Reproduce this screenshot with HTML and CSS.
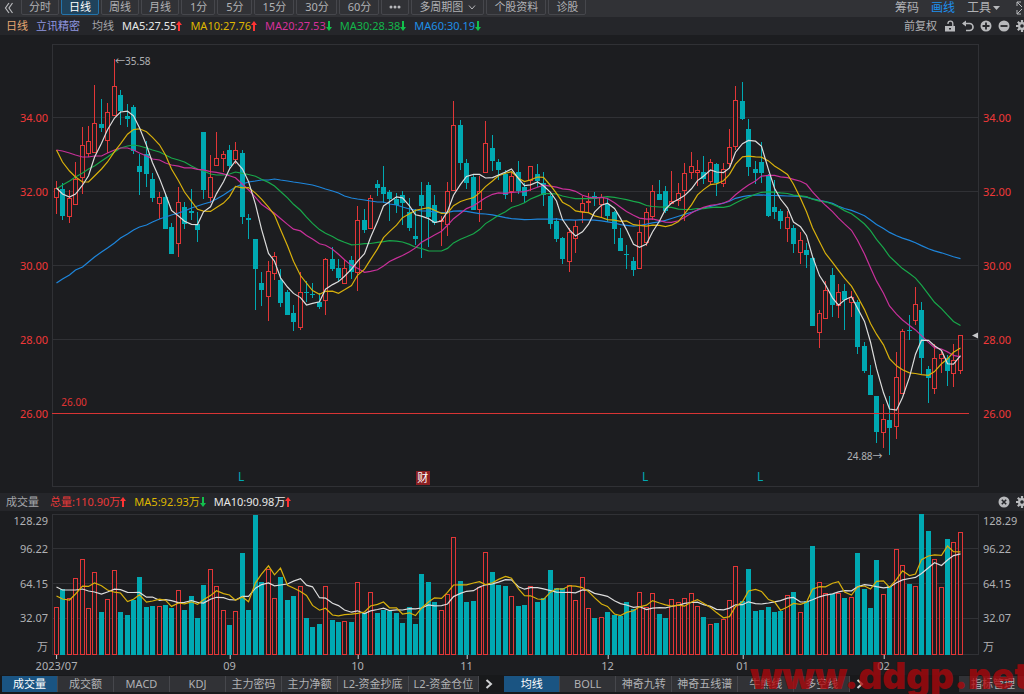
FILE: index.html
```html
<!DOCTYPE html>
<html lang="zh-CN">
<head>
<meta charset="utf-8">
<title>立讯精密 日线</title>
<link rel="stylesheet" href="styles.css">
</head>
<body>
<svg class="defs" aria-hidden="true">
  <symbol id="up" viewBox="0 0 6 10"><path d="M3 0L6 4H4V10H2V4H0z" fill="#ff3434"/></symbol>
  <symbol id="down" viewBox="0 0 6 10"><path d="M3 10L6 6H4V0H2V6H0z" fill="#12c04c"/></symbol>
  <symbol id="gear" viewBox="0 0 12 12"><g stroke="#b8b9bc" stroke-width="2.2"><path d="M6 0V12M0 6H12M1.8 1.8L10.2 10.2M10.2 1.8L1.8 10.2"/></g><circle cx="6" cy="6" r="4" fill="#b8b9bc"/><circle cx="6" cy="6" r="1.8" fill="#25262a"/></symbol>
</svg>

<nav class="toolbar">
  <button class="back" aria-label="返回"><svg width="10" height="12" viewBox="0 0 10 12"><path d="M5 1L1.500 6L5 11M8.500 1L5 6L8.500 11" fill="none" stroke="#b8b9bc" stroke-width="1.200"/></svg></button>
  <div class="periods">
    <button>分时</button>
    <button class="active">日线</button>
    <button>周线</button>
    <button>月线</button>
    <button class="minutes">1分</button>
    <button class="minutes">5分</button>
    <button class="minutes">15分</button>
    <button class="minutes">30分</button>
    <button class="minutes">60分</button>
    <button aria-label="更多"><svg width="12" height="4" viewBox="0 0 12 4" fill="#b8b9bc"><circle cx="2" cy="2" r="1.500"/><circle cx="6" cy="2" r="1.500"/><circle cx="10" cy="2" r="1.500"/></svg></button>
    <button>多周期图<svg class="chev" width="8" height="5" viewBox="0 0 8 5"><path d="M1 .5L4 4L7 .5" fill="none" stroke="#b8b9bc"/></svg></button>
    <button>个股资料</button>
    <button>诊股</button>
  </div>
  <div class="tools">
    <button>筹码</button>
    <button class="on">画线</button>
    <button>工具<svg width="7" height="4" viewBox="0 0 7 4"><path d="M0 0H7L3.500 4z" fill="#b8b9bc"/></svg></button>
    <button class="edge" aria-label="全屏"><svg width="6" height="14" viewBox="0 0 6 14"><path d="M1 5V1H5M1 1L6 6M1 9V13H5M1 13L6 8" fill="none" stroke="#b8b9bc"/></svg></button>
  </div>
</nav>

<header class="info">
  <div class="legend">
    <span class="c-day">日线</span>
    <span class="c-name">立讯精密</span>
    <span class="c-grey label">均线</span>
    <span class="c-white">MA5:27.55<svg class="arr"><use href="#up"/></svg></span>
    <span class="c-yellow">MA10:27.76<svg class="arr"><use href="#up"/></svg></span>
    <span class="c-pink">MA20:27.53<svg class="arr"><use href="#down"/></svg></span>
    <span class="c-green">MA30:28.38<svg class="arr"><use href="#down"/></svg></span>
    <span class="c-blue">MA60:30.19<svg class="arr"><use href="#down"/></svg></span>
  </div>
  <div class="actions">
    <button class="adjust">前复权</button>
    <button aria-label="锁定"><svg width="12" height="12" viewBox="0 0 12 12"><path d="M1 6H11V11.500H1z" fill="#b8b9bc"/><path d="M4 4V3.500A2.300 2.300 0 0 1 8.800 3.500V6" fill="none" stroke="#b8b9bc" stroke-width="1.300"/><rect x="5" y="8" width="2" height="1.500" fill="#25262a"/></svg></button>
    <button aria-label="撤销"><svg width="12" height="12" viewBox="0 0 12 12"><path d="M1 3.500H7.500A3.500 3.500 0 0 1 7.500 10.500H4" fill="none" stroke="#b8b9bc" stroke-width="1.700"/><path d="M0 3.500L4 .5V6.500z" fill="#b8b9bc"/></svg></button>
    <button aria-label="放大"><svg width="12" height="12" viewBox="0 0 12 12"><circle cx="6" cy="6" r="5.500" fill="#b8b9bc"/><path d="M6 2.500V9.500M2.500 6H9.500" stroke="#25262a" stroke-width="1.800"/></svg></button>
    <button aria-label="缩小"><svg width="12" height="12" viewBox="0 0 12 12"><circle cx="6" cy="6" r="5.500" fill="#b8b9bc"/><path d="M2.500 6H9.500" stroke="#25262a" stroke-width="1.800"/></svg></button>
    <button class="edge" aria-label="设置"><svg width="12" height="12"><use href="#gear"/></svg></button>
  </div>
</header>

<main class="panels">
  <section class="panel price">
    <div class="axis left"><span>34.00</span><span>32.00</span><span>30.00</span><span>28.00</span><span>26.00</span></div>
    <div class="plot">
      <svg id="price" viewBox="52 44 927 443" preserveAspectRatio="none"></svg>
      <span class="note high">←35.58</span>
      <span class="note low">24.88→</span>
      <span class="note level">26.00</span>
      <span class="mark l1">L</span>
      <span class="mark l2">L</span>
      <span class="mark l3">L</span>
      <span class="report">财</span>
    </div>
    <div class="axis right"><span>34.00</span><span>32.00</span><span>30.00</span><span>28.00</span><span>26.00</span></div>
  </section>

  <header class="info">
    <div class="legend">
      <span class="c-grey">成交量</span>
      <span class="c-red total">总量:110.90万<svg class="arr"><use href="#up"/></svg></span>
      <span class="c-yellow">MA5:92.93万<svg class="arr"><use href="#down"/></svg></span>
      <span class="c-white">MA10:90.98万<svg class="arr"><use href="#up"/></svg></span>
    </div>
    <div class="actions">
      <button aria-label="关闭"><svg width="12" height="12" viewBox="0 0 12 12"><circle cx="6" cy="6" r="5.500" fill="#b8b9bc"/><path d="M3.800 3.800L8.200 8.200M8.200 3.800L3.800 8.200" stroke="#25262a" stroke-width="1.600"/></svg></button>
      <button class="edge" aria-label="设置"><svg width="12" height="12"><use href="#gear"/></svg></button>
    </div>
  </header>

  <section class="panel volume">
    <div class="axis left"><span>128.29</span><span>96.22</span><span>64.15</span><span>32.07</span><span>万</span></div>
    <div class="plot"><svg id="volume" viewBox="52 514 927 141" preserveAspectRatio="none"></svg></div>
    <div class="axis right"><span>128.29</span><span>96.22</span><span>64.15</span><span>32.07</span><span>万</span></div>
  </section>
  <div class="dates" id="dates"></div>
</main>

<footer class="bottom">
  <div class="tabs">
    <button class="active">成交量</button><button>成交额</button><button>MACD</button><button>KDJ</button><button>主力密码</button><button>主力净额</button><button>L2-资金抄底</button><button>L2-资金仓位</button>
  </div>
  <button class="more" aria-label="更多指标"><svg width="8" height="10" viewBox="0 0 8 10"><path d="M1.500 1L6 5L1.500 9" fill="none" stroke="#d0d1d3" stroke-width="2"/></svg></button>
  <div class="tabs">
    <button class="active">均线</button><button>BOLL</button><button>神奇九转</button><button>神奇五线谱</button><button>牛熊线</button><button>多空线</button>
  </div>
  <button class="more" aria-label="更多主图指标"><svg width="8" height="10" viewBox="0 0 8 10"><path d="M1.500 1L6 5L1.500 9" fill="none" stroke="#d0d1d3" stroke-width="2"/></svg></button>
  <button class="manage">指标管理</button>
</footer>
<div class="watermark">www.ddgp.net</div>
<script src="chart.js"></script>
</body>
</html>
```
FILE: styles.css
```css
* { box-sizing: border-box; }
html, body { height: 100%; }
body {
  margin: 0;
  display: flex;
  flex-direction: column;
  overflow: hidden;
  position: relative;
  background: #1c1d20;
  color: #b0b1b4;
  font: 11px/14px "Noto Sans", "Noto Sans CJK SC", sans-serif;
}
button {
  margin: 0;
  padding: 0;
  border: 0;
  background: none;
  color: inherit;
  font: inherit;
  white-space: nowrap;
}
svg { display: block; flex: none; }
.defs { position: absolute; width: 0; height: 0; }

.toolbar {
  flex: none;
  display: flex;
  align-items: flex-end;
  height: 17px;
  padding: 0 0 2px 4px;
  background: #313236;
  overflow: hidden;
}
.back { width: 17px; height: 15px; }
.periods { display: flex; gap: 2px; }
.periods button {
  display: flex;
  align-items: center;
  height: 18px;
  padding: 2px 7px 0;
  border: 1px solid #46474c;
  border-radius: 2px;
}
.periods .minutes { padding-left: 8px; }
.periods .active {
  background: #20435c;
  border-color: #2474ab;
  color: #fff;
}
.chev { margin-left: 5px; }
.tools {
  margin-left: auto;
  display: flex;
  gap: 12px;
  font-size: 12px;
}
.tools button { display: flex; align-items: center; gap: 2px; height: 15px; }
.tools .on { color: #1e90ee; }
.tools .edge { width: 8px; margin-left: 4px; overflow: hidden; }

.info {
  flex: none;
  display: flex;
  align-items: center;
  height: 18px;
  background: #25262a;
  overflow: hidden;
}
.legend { display: flex; gap: 8px; padding-left: 6px; white-space: nowrap; }
.legend span { display: flex; align-items: center; }
.legend .label { margin-left: 4px; }
.legend .total { margin-left: 3px; }
.arr { width: 6px; height: 10px; }
.actions { margin-left: auto; display: flex; gap: 6px; }
.actions button { display: flex; align-items: center; height: 16px; }
.actions .adjust { margin-right: 1px; }
.actions .edge { width: 8px; overflow: hidden; }

.c-day { color: #e5a873; }
.c-name { color: #8f96e0; }
.c-grey { color: #a6a7aa; }
.c-white { color: #e8e8e8; }
.c-yellow { color: #dfb700; }
.c-pink { color: #d7309b; }
.c-green { color: #13b64a; }
.c-blue { color: #1e8fe6; }
.c-red { color: #e93939; }

.panels { flex: 1; min-height: 0; display: flex; flex-direction: column; }
.panel { display: grid; grid-template-columns: 52px 1fr 45px; min-height: 0; }
.price { flex: 443; margin: 9px 0 6px; }
.volume { flex: 141; margin-top: 3px; }
.plot { position: relative; min-height: 0; }
.plot svg { position: absolute; width: 100%; height: 100%; }
.axis { display: flex; flex-direction: column; min-height: 0; }
.axis span { flex: 74; display: flex; align-items: center; min-height: 0; }
.left { align-items: flex-end; padding-right: 4px; }
.right { padding-left: 4px; }
.price .axis { color: #f03838; }
.price .axis::before { content: ""; flex: 37; }
.price .axis::after { content: ""; flex: 36; }
.volume .axis span:nth-child(1) { flex: 14; }
.volume .axis span:nth-child(2) { flex: 42; }
.volume .axis span:nth-child(3) { flex: 28; }
.volume .axis span:nth-child(4) { flex: 42; }
.volume .axis span:nth-child(5) { flex: 16; }

.note { position: absolute; line-height: 14px; font-size: 10px; transform: translateY(-50%); }
.high { left: 6.8%; top: 3.8%; }
.low { right: 10.4%; top: 93%; }
.level { left: 1%; top: 80.8%; color: #e03434; }
.mark { position: absolute; top: 97.8%; color: #00a9b2; font-size: 12px; transform: translate(-50%, -50%); }
.l1 { left: 20.4%; }
.l2 { left: 64%; }
.l3 { left: 76.4%; }
.report {
  position: absolute;
  left: 40%;
  top: 98%;
  width: 14px;
  height: 14px;
  background: #8a1f22;
  color: #fff;
  text-align: center;
  transform: translate(-50%, -50%);
}
.dates { flex: none; position: relative; height: 20px; margin: 0 45px 0 52px; }
.dates span { position: absolute; top: 0; padding-top: 4px; transform: translateX(-50%); }
.dates span::before {
  content: "";
  position: absolute;
  top: 0;
  left: 50%;
  width: 1px;
  height: 4px;
  background: #d0d1d3;
}

.bottom {
  flex: none;
  display: flex;
  height: 19px;
  padding: 1px 0 2px 2px;
  background: #18191b;
}
.tabs { display: flex; }
.tabs button {
  min-width: 56px;
  padding: 0 5px;
  background: #313236;
  border-right: 1px solid #46474c;
}
.tabs .active { background: #1a5482; color: #fff; }
.more { width: 25px; padding-left: 6px; }
.manage { margin-left: auto; padding: 0 9px 0 12px; background: #313236; }
.watermark {
  position: absolute;
  right: -5px;
  bottom: -4px;
  color: rgba(176, 6, 10, 0.75);
  font: 900 37px/44px Inter, sans-serif;
  pointer-events: none;
}
```
FILE: chart.js
```js
// Each candle: direction (u = rise, d = fall), then high, body top, body bottom, low on the plot's y scale.
const candles = `u181,188,198,214 d183,189,216,220 u190,198,217,223 u162,179,205,205 u127,145,178,194 u126,141,154,157
u85,123,153,153 d99,124,128,132 u103,112,141,153 u59,86,116,116 d90,95,111,125 d104,116,119,127 d105,107,151,154
d154,166,172,195 d141,154,174,187 d173,179,198,202 u192,197,204,219 d193,197,229,229 d223,227,254,254 u187,202,244,257
d202,207,224,229 d189,211,213,220 d212,224,230,242 d132,132,190,199 u155,177,198,203 u132,158,166,166 u151,154,159,172
d145,150,166,169 u142,150,160,164 d150,153,217,224 d214,218,220,239 d239,239,269,310 d272,283,290,306 u261,271,297,321
u252,256,274,280 d269,280,303,307 d290,292,315,315 d305,313,322,331 u272,292,328,330 d281,292,293,302 d283,294,295,298
d293,302,307,309 u258,259,301,315 d247,259,269,271 d259,268,278,281 u260,268,284,284 d256,260,272,279 u206,220,273,291
d209,220,230,233 u195,198,229,229 d180,184,188,196 d166,187,194,203 d190,192,199,221 d193,199,205,213 d191,195,203,225
d198,212,228,231 d209,236,239,245 d182,195,206,258 d182,185,217,247 d195,205,223,225 u216,220,222,246 u182,191,225,236
u101,125,191,191 d120,125,163,170 d159,163,183,189 d175,177,210,210 u176,191,210,222 u121,143,173,173 d135,148,161,171
d159,162,170,180 d170,174,195,199 u172,176,192,202 d161,172,191,194 d183,187,196,203 u166,166,181,191 d164,174,181,187
d172,183,195,206 d193,196,224,229 d218,221,239,242 d237,238,259,264 u228,232,262,272 u220,226,239,253 u196,203,212,223
u193,201,203,212 d192,196,199,206 u194,197,205,217 d199,204,216,222 d211,212,229,244 d228,238,251,251 d245,254,255,269
d257,261,270,276 u220,232,269,269 u208,212,243,246 u185,191,217,220 d180,194,200,200 d186,191,211,213 u171,201,204,204
u183,193,201,206 u163,173,191,221 u152,166,173,179 u160,170,173,186 d156,172,179,184 u159,162,182,185 d163,164,183,196
u163,169,184,187 u129,147,164,168 u86,100,147,150 d82,101,119,120 d119,129,167,176 d161,169,173,184 d142,162,173,183
d174,175,216,217 d180,207,212,219 d209,211,221,229 u211,217,229,242 d225,228,244,253 u232,240,253,264 d243,250,255,268
d257,258,326,326 u310,313,333,348 u281,290,319,319 d268,275,305,317 u284,292,306,318 d284,291,300,330 u291,297,303,317
d300,302,347,354 d342,346,371,373 d365,375,395,395 d396,396,432,443 u404,419,433,448 d396,420,428,455 u352,377,427,439
u329,331,394,394 d315,330,331,340 u287,304,321,325 d302,310,358,374 d366,369,378,403 u344,358,389,394 u350,354,359,373
d355,358,371,386 u344,360,374,387 u335,335,371,374`.split(/\s+/).map(s => {
  const [high, top, bottom, low] = s.slice(1).split(",").map(Number);
  return { up: s[0] === "u", high, top, bottom, low };
});

const volumes = [607,589,598,578,559,608,572,612,599,570,612,615,600,577,607,606,606,605,608,590,610,596,618,585,569,586,610,625,611,553,
  610,515,582,569,598,577,600,596,586,618,627,624,586,620,622,621,622,582,613,592,613,610,611,613,623,607,624,574,582,602,
  610,594,537,581,602,601,587,552,572,585,586,596,606,605,586,602,598,570,588,588,585,600,577,608,618,617,612,615,616,602,
  609,592,607,593,614,618,599,602,598,593,606,617,624,623,619,600,566,601,569,611,610,607,612,611,595,592,612,601,546,582,
  593,594,593,598,597,553,589,608,560,594,586,549,565,584,586,514,531,559,587,539,542,532];

// Opening values of each average, for the bars whose window starts before the first candle.
const seeds = {
  ma5: [188,194,197,194],
  ma10: [150,162,171,177,182,182,176,169,162],
  ma20: [150,151,153,155,157,157,156,156,153,150,148,148,150,153,156,159,160,163,165],
  ma30: [189,185,181,177,173,169,166,161,157,152,148,146,145,146,148,150,152,155,158,160,162,166,169,171,174,175,175,174,172],
  ma60: [283,279,275,270,267,262,257,252,248,243,238,234,230,227,225,222,219,217,215,213,211,208,206,204,202,199,195,191,187,184,
    182,181,180,180,179,180,181,182,183,184,185,187,189,191,193,196,198,199,200,201,202,202,204,205,207,209,210,211,211],
  vol5: [596,599,600,594],
  vol10: [587,590,590,590,589,591,592,594,592]
};

const x = i => Math.floor(56.5 + 6.41 * i) + 0.5;
const line = (x1, y1, x2, y2, c) => `<line x1="${x1}" y1="${y1}" x2="${x2}" y2="${y2}" stroke="${c}"/>`;
const RED = "#e23637", TEAL = "#00a9b2", GRID = "#303135";

function average(values, n, seed) {
  return values.map((_, i) => i < n - 1
    ? seed[i]
    : values.slice(i - n + 1, i + 1).reduce((a, b) => a + b, 0) / n);
}
function curve(points, color) {
  return `<polyline fill="none" stroke="${color}" stroke-width="1.2" points="${points.map((y, i) => `${x(i)},${y.toFixed(1)}`).join(" ")}"/>`;
}
function body(i, top, bottom, up) {
  return up
    ? `<rect x="${x(i) - 2}" y="${top + 0.5}" width="4" height="${Math.max(1, bottom - top - 1)}" fill="#1c1d20" stroke="${RED}"/>`
    : `<rect x="${x(i) - 2.5}" y="${top}" width="5" height="${Math.max(1, bottom - top)}" fill="${TEAL}"/>`;
}

const closes = candles.map(c => c.up ? c.top : c.bottom);
let out = `<rect x="52.5" y="44.5" width="926" height="442" fill="none" stroke="${GRID}"/>`;
[117.5, 191.5, 265.5, 339.5].forEach(y => out += line(52, y, 979, y, GRID));
candles.forEach((c, i) => {
  out += line(x(i), c.high, x(i), c.low, c.up ? RED : TEAL) + body(i, c.top, c.bottom, c.up);
});
out += `<rect x="52" y="413" width="917" height="1" fill="#d83434"/>`;
out += curve(average(closes, 60, seeds.ma60), "#1e86dc");
out += curve(average(closes, 30, seeds.ma30), "#18a84a");
out += curve(average(closes, 20, seeds.ma20), "#c8309a");
out += curve(average(closes, 10, seeds.ma10), "#d8b00c");
out += curve(average(closes, 5, seeds.ma5), "#dcdcdc");
out += `<path d="M972 335.5L978 332.500V338.500z" fill="#c8c9cb"/>`;
document.getElementById("price").innerHTML = out;

out = `<rect x="52.5" y="514.5" width="926" height="140" fill="none" stroke="${GRID}"/>`;
[548.5, 583.5, 618.5].forEach(y => out += line(52, y, 979, y, GRID));
volumes.forEach((y, i) => out += body(i, y, 655, candles[i].up));
out += curve(average(volumes, 10, seeds.vol10), "#dcdcdc");
out += curve(average(volumes, 5, seeds.vol5), "#d8b00c");
document.getElementById("volume").innerHTML = out;

document.getElementById("dates").innerHTML =
  [[0, "2023/07"], [27, "09"], [47, "10"], [64, "11"], [86, "12"], [107, "01"], [129, "02"]]
    .map(([i, t]) => `<span style="left:${((x(i) - 52) / 9.27).toFixed(2)}%">${t}</span>`).join("");
```
